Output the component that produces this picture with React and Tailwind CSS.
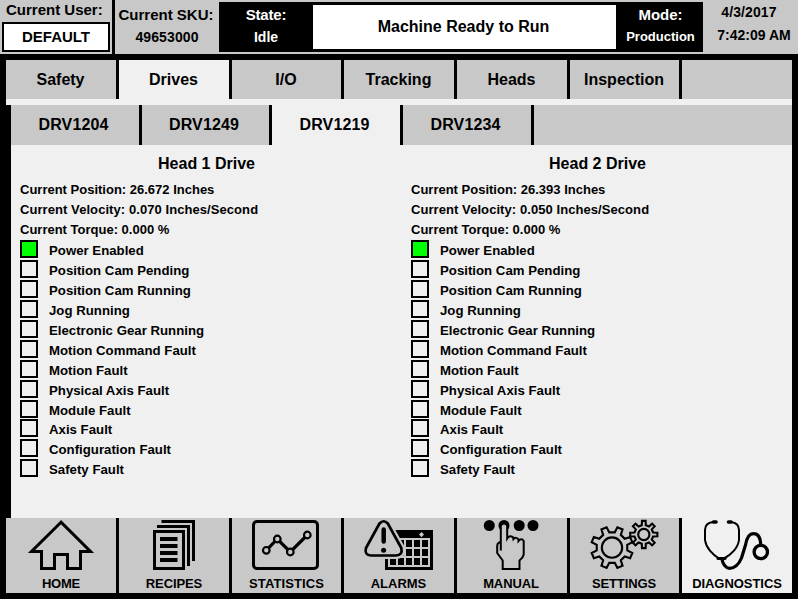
import React from "react";

const TABS = [
  { label: "Safety", w: "w-[110px]" },
  { label: "Drives", w: "w-[110px]", active: true },
  { label: "I/O", w: "w-[109px]" },
  { label: "Tracking", w: "w-[110px]" },
  { label: "Heads", w: "w-[110px]" },
  { label: "Inspection", w: "w-[109px]" },
];

const DRIVES = [
  { label: "DRV1204", w: "w-[128px]" },
  { label: "DRV1249", w: "w-[127px]" },
  { label: "DRV1219", w: "w-[128px]", active: true },
  { label: "DRV1234", w: "w-[128px]" },
];

const STATUSES = [
  "Power Enabled",
  "Position Cam Pending",
  "Position Cam Running",
  "Jog Running",
  "Electronic Gear Running",
  "Motion Command Fault",
  "Motion Fault",
  "Physical Axis Fault",
  "Module Fault",
  "Axis Fault",
  "Configuration Fault",
  "Safety Fault",
];

function gearPath(cx, cy, outer, root, teeth, offset) {
  const points = [];
  const step = (Math.PI * 2) / teeth;
  for (let i = 0; i < teeth; i++) {
    const a = offset + i * step;
    [
      [root, -0.27],
      [outer, -0.17],
      [outer, 0.17],
      [root, 0.27],
    ].forEach(([r, k]) => {
      const t = a + k * step;
      points.push(`${(cx + r * Math.cos(t)).toFixed(2)} ${(cy + r * Math.sin(t)).toFixed(2)}`);
    });
  }
  return `M${points.join("L")}Z`;
}

function Icon({ viewBox, children }) {
  return (
    <svg className="block h-[58px] w-full" viewBox={viewBox} fill="none" stroke="#000">
      {children}
    </svg>
  );
}

function HomeIcon() {
  return (
    <Icon viewBox="6 518 110 58">
      <path
        strokeWidth="3"
        d="M61 522.2L31.5 551.5H41.5V568.5H54.5V554.5H67.5V568.5H80.5V551.5H90.5Z"
      />
    </Icon>
  );
}

function RecipesIcon() {
  return (
    <Icon viewBox="119 518 110 58">
      <g strokeWidth="3">
        <path d="M154.5 531.5H183.5V568.5H154.5Z" />
        <path d="M157 526.5H188.5V566" />
        <path d="M161.5 521.5H193.5V561" />
      </g>
      <path strokeWidth="4" d="M160 539H177.5M160 546H177.5M160 553H177.5M160 560H177.5" />
    </Icon>
  );
}

function StatisticsIcon() {
  return (
    <Icon viewBox="232 518 109 58">
      <rect x="253.5" y="521.5" width="64" height="47" rx="3.5" strokeWidth="3" />
      <path strokeWidth="3.2" d="M266.3 550.3L277.3 539L290.3 552L307.3 535" />
      <g strokeWidth="2.2" fill="#c8c8c8">
        <circle cx="266.3" cy="550.3" r="3.3" />
        <circle cx="277.3" cy="539" r="3.3" />
        <circle cx="290.3" cy="552" r="3.3" />
        <circle cx="307.3" cy="535" r="3.3" />
      </g>
    </Icon>
  );
}

function AlarmsIcon() {
  return (
    <Icon viewBox="344 518 110 58">
      <path fill="#000" stroke="none" d="M385 530H433V570H385Z" />
      <path fill="#c8c8c8" stroke="none" d="M388 538H430V567H388Z" />
      <g fill="#000" stroke="none">
        {[0, 1, 2].map((r) =>
          [0, 1, 2, 3, 4].map((c) => (
            <rect key={`${r}-${c}`} x={390 + c * 8} y={540 + r * 9} width="6" height="7" />
          ))
        )}
      </g>
      <path fill="#c8c8c8" stroke="none" d="M421.5 532L424 534.6L421.5 537.2L419 534.6Z" />
      <g strokeLinejoin="round" fill="#c8c8c8">
        <path
          stroke="#c8c8c8"
          strokeWidth="7"
          d="M379.5 523.5Q383.7 519 387.8 523.5L401.3 548Q403 555.3 396 555.5H371Q364 555 366 548Z"
        />
        <path
          strokeWidth="2.7"
          d="M379.5 523.5Q383.7 519 387.8 523.5L401.3 548Q403 555.3 396 555.5H371Q364 555 366 548Z"
        />
      </g>
      <path strokeWidth="4.5" strokeLinecap="round" d="M383.7 529.5V541.5" />
      <circle cx="383.6" cy="550.2" r="2.5" fill="#000" stroke="none" />
    </Icon>
  );
}

function ManualIcon() {
  return (
    <Icon viewBox="457 518 110 58">
      <g fill="#000" stroke="none">
        <circle cx="489.3" cy="525.5" r="5.5" />
        <circle cx="504" cy="525.5" r="5.5" />
        <circle cx="519.2" cy="525.5" r="5.5" />
        <circle cx="533" cy="525.5" r="5.5" />
      </g>
      <path
        fill="#c8c8c8"
        strokeWidth="2"
        d="M500.8 550.5V526Q501.5 523.5 504 523.5Q506.7 523.5 507.2 526V538.5Q509 535.5 511.5 536.5Q513.5 537 513.5 539Q516 536.500 518.5 539.5V541Q521.5 537.5 523.7 541V554.5Q523 558 519.5 560.5V569H502.7V560.5L497.2 553V545.5Q497.5 542.5 500.8 542"
      />
    </Icon>
  );
}

function SettingsIcon() {
  return (
    <Icon viewBox="570 518 109 58">
      <g strokeWidth="2.1">
        <path d={gearPath(612, 547.6, 21, 15.5, 8, Math.PI / 8)} />
        <circle cx="612" cy="547.6" r="10.2" />
        <path d={gearPath(643.8, 534.5, 13.7, 9.5, 8, 0)} fill="#c8c8c8" />
        <circle cx="643.8" cy="534.5" r="5.6" />
      </g>
    </Icon>
  );
}

function DiagnosticsIcon() {
  return (
    <Icon viewBox="682 518 110 58">
      <g strokeLinecap="round" strokeLinejoin="round">
        <path
          strokeWidth="2"
          d="M713 522Q705 523 705 530V540C706 548 713 555 719 558.5H724C731 555 738 548 739 540V530Q739 523 731 522"
        />
        <path strokeWidth="3.6" d="M713.5 522H716M728.5 522H731" />
        <path strokeWidth="3" d="M718 558.5H725" />
        <path
          strokeWidth="3.2"
          d="M722 559C722.5 564 726 568.3 729.5 568.3C735 568.3 739 564 741.5 558L745.5 545C747 536 750 533.7 753.5 533.7C758 533.7 760.5 537 760.7 545"
        />
      </g>
      <circle cx="760.8" cy="552" r="6.7" strokeWidth="3.3" />
    </Icon>
  );
}

const NAV = [
  { label: "HOME", w: "w-[110px]", icon: HomeIcon, t: "tracking-[-0.2px]" },
  { label: "RECIPES", w: "w-[110px]", icon: RecipesIcon, t: "tracking-[-0.1px]" },
  { label: "STATISTICS", w: "w-[109px]", icon: StatisticsIcon, t: "tracking-[0.1px]" },
  { label: "ALARMS", w: "w-[110px]", icon: AlarmsIcon, t: "pr-px tracking-normal" },
  { label: "MANUAL", w: "w-[110px]", icon: ManualIcon, t: "pr-[2px] tracking-[-0.1px]" },
  { label: "SETTINGS", w: "w-[109px]", icon: SettingsIcon, t: "pr-px tracking-[-0.1px]" },
  { label: "DIAGNOSTICS", w: "w-[110px]", icon: DiagnosticsIcon, active: true, t: "tracking-[-0.05px]" },
];

function Header() {
  return (
    <header className="flex h-[54px] bg-[#c8c8c8]">
      <div className="w-[112px] pt-px">
        <div className="pl-[6px] text-[15px] leading-[18px]">Current User:</div>
        <div className="mt-[3px] ml-[2px] flex h-[30px] w-[108px] items-center justify-center border-2 border-black bg-white pb-px text-[15px] leading-none">
          DEFAULT
        </div>
      </div>
      <div className="w-[3px] bg-black" />
      <div className="w-[104px] pt-[4px] text-center">
        <div className="pr-[2px] text-[15px] leading-[22px]">Current SKU:</div>
        <div className="text-[14px] leading-[22px] tracking-[0.1px]">49653000</div>
      </div>
      <div className="mt-[2px] flex h-[50px] w-[484px] bg-black text-white">
        <div className="w-[94px] pt-[2px] text-center">
          <div className="text-[15px] leading-[22px] tracking-[-0.2px]">State:</div>
          <div className="text-[14px] leading-[22px]">Idle</div>
        </div>
        <div className="mt-[3px] flex h-[44px] w-[303px] items-center justify-center bg-white pr-[2px] pb-px text-[16px] leading-none text-black">
          Machine Ready to Run
        </div>
        <div className="flex-1 pt-[2px] pl-[2px] text-center">
          <div className="text-[15px] leading-[22px]">Mode:</div>
          <div className="text-[13px] leading-[21px]">Production</div>
        </div>
      </div>
      <div className="flex-1 pt-px text-center">
        <div className="pr-[3px] text-[14px] leading-[22px] tracking-[0.1px]">4/3/2017</div>
        <div className="pl-[7px] text-[14px] leading-[25px]">7:42:09 AM</div>
      </div>
    </header>
  );
}

function TabStrip({ items, size }) {
  return (
    <div className={`flex bg-[#c8c8c8] ${size}`}>
      {items.map((tab) => (
        <div key={tab.label} className="flex">
          <div
            className={`flex items-center justify-center text-[16px] leading-none ${tab.w} ${
              tab.active ? "bg-[#f0f0f0]" : "bg-[#c8c8c8]"
            }`}
          >
            <span className={tab.label.startsWith("DRV") ? "pr-[3px] tracking-[0.1px]" : "pr-px"}>
              {tab.label}
            </span>
          </div>
          <div className="w-[3px] bg-black" />
        </div>
      ))}
    </div>
  );
}

function HeadPanel({ title, position, velocity, torque }) {
  return (
    <section className="w-[391px] shrink-0 pt-[9px]">
      <h2 className="text-center text-[16px] leading-[20px]">{title}</h2>
      <div className="mt-[6px] pl-[9px] text-[13px] leading-[20px]">
        <div>Current Position: {position} Inches</div>
        <div className="tracking-[0.07px]">Current Velocity: {velocity} Inches/Second</div>
        <div>Current Torque: {torque} %</div>
      </div>
      <ul className="pl-[9px] text-[13.2px] tracking-[0.02px]">
        {STATUSES.map((status, i) => (
          <li key={status} className="flex h-[19.94px] items-start">
            <span
              className={`block h-[18px] w-[18px] border-2 border-black ${
                i === 0 ? "bg-[#00ff00]" : "bg-[#f0f0f0]"
              }`}
            />
            <span className="pl-[11px] leading-[21.4px]">{status}</span>
          </li>
        ))}
      </ul>
    </section>
  );
}

export default function App() {
  return (
    <div className="flex h-[599px] w-[798px] flex-col overflow-hidden bg-black font-['Liberation_Sans',Arial,sans-serif] font-bold text-black">
      <Header />
      <main className="mt-[6px] mr-[6px] ml-[6px] h-[458px]">
        <TabStrip items={TABS} size="h-[39px]" />
        <div className="h-[6px] bg-[#f0f0f0]" />
        <div className="ml-[5px] h-[413px] bg-[#f0f0f0]">
          <TabStrip items={DRIVES} size="h-[40px]" />
          <div className="flex">
            <HeadPanel title="Head 1 Drive" position="26.672" velocity="0.070" torque="0.000" />
            <HeadPanel title="Head 2 Drive" position="26.393" velocity="0.050" torque="0.000" />
          </div>
        </div>
      </main>
      <nav className="mx-[6px] flex h-[75px] gap-[3px]">
        {NAV.map(({ label, w, icon: Glyph, active, t }) => (
          <div key={label} className={`${w} ${active ? "bg-[#f0f0f0]" : "bg-[#c8c8c8]"}`}>
            <Glyph />
            <div className={`text-center text-[13px] leading-[15px] ${t}`}>{label}</div>
          </div>
        ))}
      </nav>
    </div>
  );
}
